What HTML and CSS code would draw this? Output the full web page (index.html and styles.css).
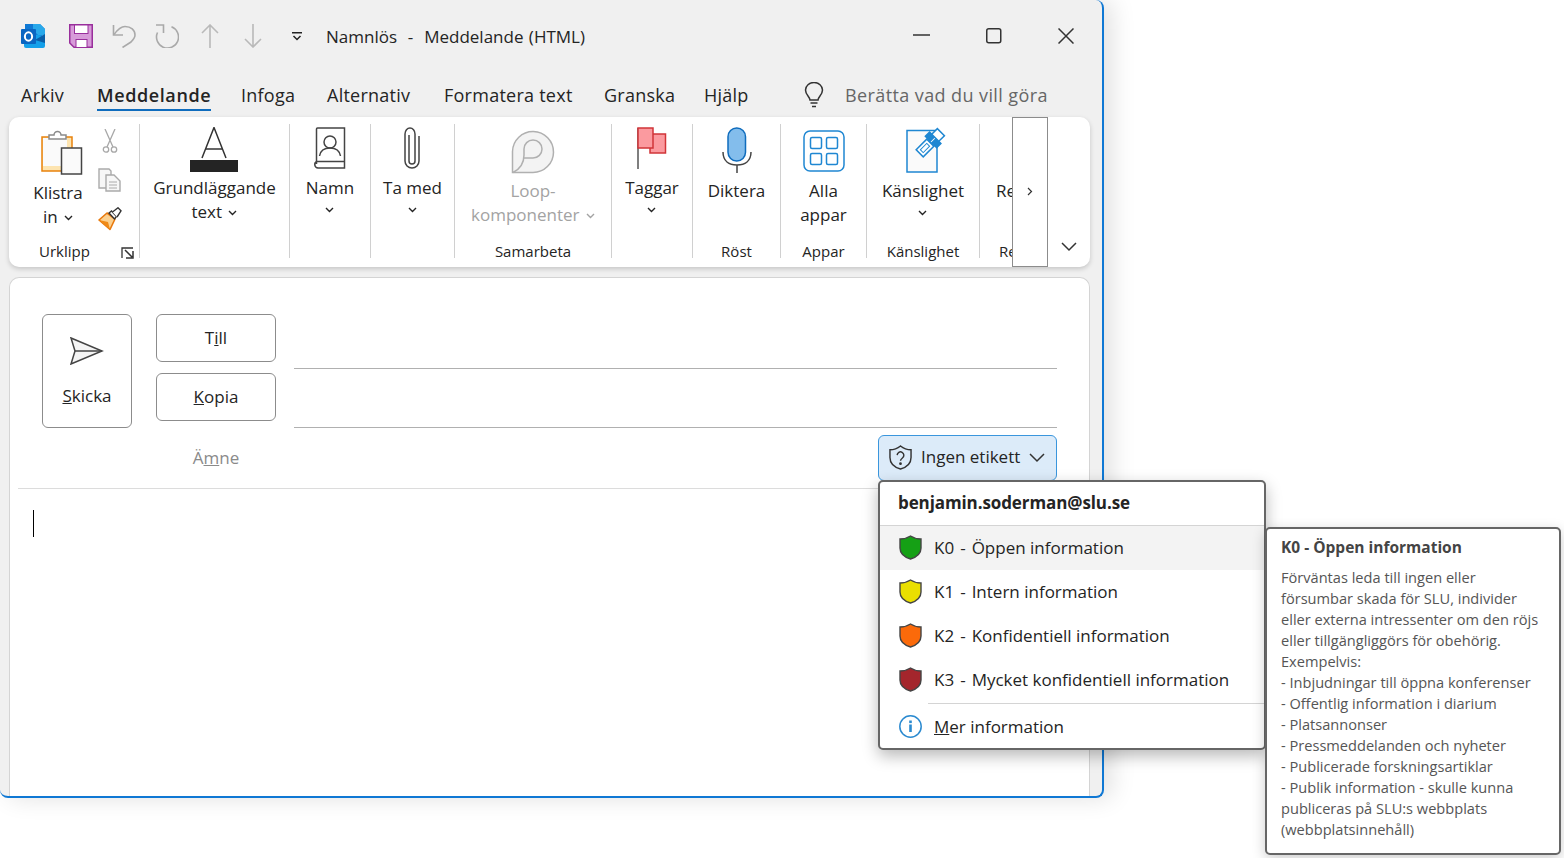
FILE: index.html
```html
<!DOCTYPE html>
<html lang="sv">
<head>
<meta charset="utf-8">
<title>Namnlös - Meddelande (HTML)</title>
<link rel="stylesheet" href="styles.css">
</head>
<body>
<div class="window">
  <header class="titlebar">
    <span class="qat qat-first"><svg width="24" height="24" viewBox="0 0 24 24"><path d="M4 0h15l5 5v5l-5 3-15-3z" fill="#0f78d4"/><path d="M12 0h7l5 5v6h-7l-5-5z" fill="#28a8ea"/><path d="M3 9l21 3v10a2 2 0 0 1-2 2H5a2 2 0 0 1-2-2z" fill="#14a0ea"/><path d="M14 16l10-6v9z" fill="#0a5ea8"/><rect x="0" y="5" width="15" height="15" rx="1" fill="#0a66c2"/><ellipse cx="7.500" cy="12.500" rx="3.600" ry="4.200" fill="none" stroke="#fff" stroke-width="2"/></svg></span>
    <span class="qat"><svg width="24" height="24" viewBox="0 0 24 24"><path d="M.75.75h22.5v22.5H5L.75 19z" fill="#d79bd9" stroke="#992f9c" stroke-width="1.500"/><rect x="5.500" y="1" width="13.500" height="8.500" fill="#fff" stroke="#992f9c"/><rect x="7" y="15.500" width="11" height="8" fill="#fff" stroke="#992f9c"/></svg></span>
    <span class="qat"><svg width="24" height="24" viewBox="0 0 24 24" fill="none" stroke="#a9a9a9" stroke-width="1.600"><path d="M1.500 1v10H11"/><path d="M2 10.500C6 5 9 2.500 13 2.500c6 0 10 3.500 10 8.500 0 3-2 5-4 7l-8.500 5.500"/></svg></span>
    <span class="qat"><svg width="24" height="24" viewBox="0 0 24 24" fill="none" stroke="#a9a9a9" stroke-width="1.600"><path d="M1 1h7.500v8"/><path d="M16.500 2.800A11 11 0 1 1 2.500 8.500"/></svg></span>
    <span class="qat"><svg width="18" height="24" viewBox="0 0 18 24" fill="none" stroke="#b9b9b9" stroke-width="1.600"><path d="M9 1v23M1 9l8-8 8 8"/></svg></span>
    <span class="qat"><svg width="18" height="24" viewBox="0 0 18 24" fill="none" stroke="#b9b9b9" stroke-width="1.600"><path d="M9 0v23M1 15l8 8 8-8"/></svg></span>
    <span class="qat qat-drop"><svg width="12" height="9" viewBox="0 0 12 9" fill="none" stroke="#222" stroke-width="1.500"><path d="M1 .75h10M2.500 4l3.500 3.500L9.500 4"/></svg></span>
    <span class="doc-title">Namnlös&nbsp; - &nbsp;Meddelande (HTML)</span>
    <div class="win-controls">
      <span class="win-btn"><svg width="18" height="4" viewBox="0 0 18 4"><path d="M0 1h17" stroke="#333" stroke-width="1.500"/></svg></span>
      <span class="win-btn"><svg width="16" height="16" viewBox="0 0 16 16"><rect x=".75" y=".75" width="14" height="14" rx="2" fill="none" stroke="#333" stroke-width="1.500"/></svg></span>
      <span class="win-btn"><svg width="16" height="16" viewBox="0 0 16 16"><path d="M.5.500l15 15M15.500.500l-15 15" stroke="#333" stroke-width="1.500"/></svg></span>
    </div>
  </header>

  <nav class="tabs">
    <span class="tab t1">Arkiv</span>
    <span class="tab t2 active">Meddelande</span>
    <span class="tab t3">Infoga</span>
    <span class="tab t4">Alternativ</span>
    <span class="tab t5">Formatera text</span>
    <span class="tab t6">Granska</span>
    <span class="tab t7">Hjälp</span>
    <span class="tellme"><svg width="20" height="26" viewBox="0 0 20 26" fill="none" stroke="#333" stroke-width="1.500"><path d="M6 18c0-3-4.500-5-4.500-10a8.500 7.500 0 0 1 17 0c0 5-4.500 7-4.500 10z"/><path d="M6.500 21h7M8 24.500h4"/></svg><span class="tell-text">Berätta vad du vill göra</span></span>
  </nav>

  <section class="ribbon">
    <div class="group g1">
      <div class="clip-row">
        <div class="rb-btn paste">
          <div class="ic ic-l"><svg class="paste-icon" width="46" height="46" viewBox="0 0 46 46"><rect x="4" y="8" width="30" height="34" fill="#fde4b0" stroke="#e8820c" stroke-width="1.500"/><rect x="5" y="9" width="24" height="28" fill="#fafafa"/><path d="M11 10V6h5a3.500 3.500 0 0 1 7 0h5v4z" fill="#fff" stroke="#8a8a8a" stroke-width="1.500"/><rect x="23.500" y="19" width="20" height="26" fill="#fafafa" stroke="#444" stroke-width="1.500"/></svg></div>
          <div class="rb-text">Klistra<br>in <svg class="chev" width="9" height="6" viewBox="0 0 9 6"><path d="M1 1l3.500 3.500L8 1"/></svg></div>
        </div>
        <div class="small-col">
          <svg width="16" height="24" viewBox="0 0 16 24" fill="none" stroke="#a8a8a8" stroke-width="1.300"><circle cx="4" cy="20.500" r="2.700"/><circle cx="12" cy="20.500" r="2.700"/><path d="M5 18L13 0M11 18L3 0"/></svg>
          <svg width="24" height="24" viewBox="0 0 24 24" fill="none" stroke="#aaa" stroke-width="1.400"><path d="M8 20H1V1h10l2 2v4" fill="#f7f7f7"/><path d="M8 7h8l6 6v10H8z" fill="#f7f7f7"/><path d="M11 14h8M11 17h8M11 20h8" stroke-width="1"/></svg>
          <svg width="24" height="24" viewBox="0 0 24 24"><path d="M1 13l8-7 8 6-5 10.500z" fill="#fbd08f" stroke="#e8780c" stroke-width="1.600" stroke-linejoin="round"/><path d="M1 13l9 2 2 7.500z" fill="#ef8a17"/><path d="M11 6l2.500-2 5 5.500-2 2.500z" fill="#fff" stroke="#333" stroke-width="1.400"/><path d="M14.500 5L20 .8l3 3-4 6.200" fill="#fff" stroke="#333" stroke-width="1.400"/></svg>
        </div>
      </div>
      <div class="group-label clip-label"><span>Urklipp</span><svg width="13" height="12" viewBox="0 0 13 12" fill="none" stroke="#333" stroke-width="1.300"><path d="M1 11V1h11"/><path d="M4 3l7 7M5 11h7V4" stroke-width="1.500"/></svg></div>
    </div>

    <div class="group g2">
      <div class="rb-btn">
        <div class="ic"><svg width="48" height="46" viewBox="0 0 48 46"><path d="M12 31L24 .5 36 31" fill="none" stroke="#333" stroke-width="1.500"/><path d="M16 22h16" stroke="#333" stroke-width="1.500"/><rect y="33" width="48" height="12" fill="#242424"/></svg></div>
        <div class="rb-text">Grundläggande<br>text <svg class="chev" width="9" height="6" viewBox="0 0 9 6"><path d="M1 1l3.500 3.500L8 1"/></svg></div>
      </div>
    </div>

    <div class="group g3">
      <div class="rb-btn">
        <div class="ic"><svg width="33" height="42" viewBox="0 0 33 42" fill="none" stroke="#444" stroke-width="1.500"><path d="M3.500 37V2a1 1 0 0 1 1-1h27v40H5a3.500 3.500 0 0 1-1.500-6.500h28"/><circle cx="17" cy="15" r="6"/><path d="M6.500 29c1-6 5-8 10.500-8s9.500 2 10.500 8"/></svg></div>
        <div class="rb-text">Namn<br><svg class="chev solo" width="9" height="6" viewBox="0 0 9 6"><path d="M1 1l3.500 3.500L8 1"/></svg></div>
      </div>
    </div>

    <div class="group g4">
      <div class="rb-btn">
        <div class="ic"><svg width="16" height="42" viewBox="0 0 16 42" fill="none" stroke="#444" stroke-width="1.500"><path d="M5 8v26a3 3 0 0 0 6 0V7a5 6 0 0 0-10 0v27a7 7 0 0 0 14 0V9"/></svg></div>
        <div class="rb-text">Ta med<br><svg class="chev solo" width="9" height="6" viewBox="0 0 9 6"><path d="M1 1l3.500 3.500L8 1"/></svg></div>
      </div>
    </div>

    <div class="group g5">
      <div class="rb-btn">
        <div class="ic ic-m"><svg width="44" height="44" viewBox="0 0 44 44" fill="none" stroke="#b0b0b0" stroke-width="1.500"><path d="M1.500 42.500V21.500a20.500 20.500 0 1 1 20.500 21z" fill="#f3f3f3"/><path d="M13 19a9 9 0 1 1 9 9h-9"/><path d="M13 19v6c0 8-4 14-11 17.500"/></svg></div>
        <div class="rb-text muted">Loop-<br>komponenter <svg class="chev" width="9" height="6" viewBox="0 0 9 6"><path d="M1 1l3.500 3.500L8 1"/></svg></div>
      </div>
      <div class="group-label">Samarbeta</div>
    </div>

    <div class="group g6">
      <div class="rb-btn">
        <div class="ic"><svg width="30" height="42" viewBox="0 0 30 42"><path d="M1 1v41" stroke="#555" stroke-width="1.500"/><rect x="13" y="7" width="15.500" height="19" fill="#fb9a9f" stroke="#d13438" stroke-width="1.500"/><rect x="1" y="1" width="15" height="20" fill="#fb9a9f" stroke="#d13438" stroke-width="1.500"/></svg></div>
        <div class="rb-text">Taggar<br><svg class="chev solo" width="9" height="6" viewBox="0 0 9 6"><path d="M1 1l3.500 3.500L8 1"/></svg></div>
      </div>
    </div>

    <div class="group g7">
      <div class="rb-btn">
        <div class="ic"><svg width="30" height="46" viewBox="0 0 30 46" fill="none"><rect x="6" y="1" width="17.500" height="33" rx="8.700" fill="#83bdec" stroke="#0f6cbd" stroke-width="1.500"/><path d="M1 25c0 9 6 13 14 13s14-4 14-13M15 38v8" stroke="#444" stroke-width="1.500"/></svg></div>
        <div class="rb-text gap-m">Diktera</div>
      </div>
      <div class="group-label">Röst</div>
    </div>

    <div class="group g8">
      <div class="rb-btn">
        <div class="ic ic-m"><svg width="42" height="42" viewBox="0 0 42 42" fill="none" stroke="#1f87d2" stroke-width="1.500"><rect x="1" y="1" width="40" height="40" rx="6"/><rect x="7.500" y="7.500" width="11" height="11" rx="1.500"/><rect x="23.500" y="7.500" width="11" height="11" rx="1.500"/><rect x="7.500" y="23.500" width="11" height="11" rx="1.500"/><rect x="23.500" y="23.500" width="11" height="11" rx="1.500"/></svg></div>
        <div class="rb-text">Alla<br>appar</div>
      </div>
      <div class="group-label">Appar</div>
    </div>

    <div class="group g9">
      <div class="rb-btn">
        <div class="ic"><svg class="sens-icon" width="42" height="46" viewBox="0 0 42 46"><path d="M1 3.500h30V45H1z" fill="#fafafa" stroke="#1f87d2" stroke-width="1.500"/><g transform="translate(25 15) rotate(-45)" stroke="#1f87d2" stroke-width="1.500"><rect x="-16" y="-5" width="15" height="10" fill="#fff"/><rect x="-13" y="-2" width="9" height="4" fill="#fff" stroke-width="1"/><rect x="0" y="-8" width="6" height="16" fill="#1f87d2"/><path d="M0 0h6" stroke="#fff" stroke-width="1"/><rect x="6" y="-5" width="8" height="10" fill="#fff"/></g></svg></div>
        <div class="rb-text gap-m">Känslighet<br><svg class="chev solo" width="9" height="6" viewBox="0 0 9 6"><path d="M1 1l3.500 3.500L8 1"/></svg></div>
      </div>
      <div class="group-label">Känslighet</div>
    </div>

    <div class="group g10">
      <div class="rb-btn cut">
        <div class="ic ic-m"></div>
        <div class="rb-text">Re</div>
      </div>
      <div class="group-label cut-label">Re</div>
    </div>

    <div class="ribbon-scroll"><svg width="6" height="9" viewBox="0 0 6 9" fill="none" stroke="#333" stroke-width="1.200"><path d="M1 1l3.500 3.500L1 8"/></svg></div>
    <svg class="ribbon-collapse" width="16" height="10" viewBox="0 0 16 10" fill="none" stroke="#333" stroke-width="1.500"><path d="M1 1l7 7 7-7"/></svg>
  </section>

  <main class="compose">
    <div class="head">
      <button class="send"><svg width="34" height="28" viewBox="0 0 34 28" fill="none" stroke="#444" stroke-width="1.500"><path d="M1 1l31 13L1 27l4-13z" fill="#f4f4f4"/><path d="M5 14h27"/></svg><span><u>S</u>kicka</span></button>
      <button class="addr"><span>T<u>i</u>ll</span></button>
      <div class="field"></div>
      <button class="addr"><span><u>K</u>opia</span></button>
      <div class="field"></div>
      <div class="subject">Ä<u>m</u>ne</div>
      <button class="label-btn"><svg width="23" height="25" viewBox="0 0 24 26" fill="none" stroke="#333" stroke-width="1.500"><path d="M12 1c3 2.500 6.500 4 11 4v8c0 6-4 10-11 12C5 23 1 19 1 13V5c4.500 0 8-1.500 11-4z"/><path d="M8.500 10.500a3.500 3.500 0 1 1 5.500 3c-1.300.9-2 1.500-2 3"/><circle cx="12" cy="19.500" r=".7" fill="#333"/></svg><span>Ingen etikett</span><svg width="16" height="10" viewBox="0 0 16 10" fill="none" stroke="#333" stroke-width="1.500"><path d="M1 1l7 7 7-7"/></svg></button>
    </div>
    <div class="body"><span class="caret"></span></div>
  </main>
</div>

<div class="menu">
  <div class="menu-head">benjamin.soderman@slu.se</div>
  <div class="menu-row hover"><svg class="shield" width="23" height="25" viewBox="0 0 23 25"><path d="M11.500 1c3 2 6.500 3 10.500 3v9c0 5-4 9-10.500 11C5 22 1 18 1 13V4c4 0 7.500-1 10.500-3z" fill="#15a015" stroke="#444" stroke-width="1.400"/></svg><span>K0<span class="dash">-</span>Öppen information</span></div>
  <div class="menu-row"><svg class="shield" width="23" height="25" viewBox="0 0 23 25"><path d="M11.500 1c3 2 6.500 3 10.500 3v9c0 5-4 9-10.500 11C5 22 1 18 1 13V4c4 0 7.500-1 10.500-3z" fill="#eadf00" stroke="#444" stroke-width="1.400"/></svg><span>K1<span class="dash">-</span>Intern information</span></div>
  <div class="menu-row"><svg class="shield" width="23" height="25" viewBox="0 0 23 25"><path d="M11.500 1c3 2 6.500 3 10.500 3v9c0 5-4 9-10.500 11C5 22 1 18 1 13V4c4 0 7.500-1 10.500-3z" fill="#fb6a0a" stroke="#444" stroke-width="1.400"/></svg><span>K2<span class="dash">-</span>Konfidentiell information</span></div>
  <div class="menu-row"><svg class="shield" width="23" height="25" viewBox="0 0 23 25"><path d="M11.500 1c3 2 6.500 3 10.500 3v9c0 5-4 9-10.500 11C5 22 1 18 1 13V4c4 0 7.500-1 10.500-3z" fill="#a4262c" stroke="#444" stroke-width="1.400"/></svg><span>K3<span class="dash">-</span>Mycket konfidentiell information</span></div>
  <div class="menu-sep"></div>
  <div class="menu-row more"><svg class="shield" width="23" height="23" viewBox="0 0 23 23"><circle cx="11.500" cy="11.500" r="10.700" fill="#fff" stroke="#2b8ad0" stroke-width="1.500"/><rect x="10.200" y="9.500" width="2.600" height="7.500" fill="#2b8ad0"/><rect x="10.200" y="5.500" width="2.600" height="2.600" fill="#2b8ad0"/></svg><span><u>M</u>er information</span></div>
</div>

<aside class="tip">
  <div class="tip-title">K0 - Öppen information</div>
  <div class="tip-body">Förväntas leda till ingen eller<br>försumbar skada för SLU, individer<br>eller externa intressenter om den röjs<br>eller tillgängliggörs för obehörig.<br>Exempelvis:<br>- Inbjudningar till öppna konferenser<br>- Offentlig information i diarium<br>- Platsannonser<br>- Pressmeddelanden och nyheter<br>- Publicerade forskningsartiklar<br>- Publik information - skulle kunna<br>publiceras på SLU:s webbplats<br>(webbplatsinnehåll)</div>
</aside>
</body>
</html>
```

FILE: styles.css
```css
* { box-sizing: border-box; }
html, body { margin: 0; height: 858px; overflow: hidden; background: #fff; }
body { position: relative; font-family: "Open Sans", "Noto Sans", sans-serif; color: #242424; font-size: 16px; }
svg { display: block; flex: none; }

.window { width: 1104px; height: 798px; background: #f0f0f0; border-right: 2px solid #0f78d4; border-bottom: 2px solid #0f78d4; border-radius: 0 8px 8px 8px; box-shadow: 8px 0 24px rgba(0,0,0,.12); display: flex; flex-direction: column; overflow: hidden; }

.titlebar { height: 72px; padding-left: 11px; display: flex; align-items: center; flex: none; }
.qat { width: 43px; display: flex; justify-content: center; }
.qat-first { margin-right: 5px; }
.qat-drop { margin-left: 1px; }
.doc-title { margin-left: 8px; font-size: 17px; word-spacing: 1px; white-space: nowrap; }
.win-controls { margin-left: auto; display: flex; }
.win-btn { width: 72px; height: 16px; display: flex; justify-content: center; align-items: center; }

.tabs { height: 45px; padding-left: 21px; display: flex; flex: none; }
.tab { position: relative; padding-top: 8px; line-height: 31px; font-size: 18px; letter-spacing: .25px; white-space: nowrap; }
.t1 { width: 76px; } .t2 { width: 144px; } .t3 { width: 86px; } .t4 { width: 117px; } .t5 { width: 160px; } .t6 { width: 100px; } .t7 { width: 100px; }
.active { font-weight: 600; letter-spacing: .6px; }
.active::after { content: ""; position: absolute; left: 0; width: 114px; top: 37px; height: 2px; background: #0f6cbd; }
.tellme { display: flex; align-items: center; gap: 21px; height: 45px; }
.tell-text { font-size: 18px; color: #666; letter-spacing: .4px; }

.ribbon { position: relative; margin-left: 9px; width: 1081px; height: 150px; flex: none; padding-top: 7px; background: #fff; border-radius: 10px; box-shadow: 0 2px 5px rgba(0,0,0,.18); display: flex; }
.group { height: 134px; border-right: 1px solid #d0d0d0; display: flex; flex-direction: column; align-items: center; flex: none; }
.g1 { width: 131px; align-items: flex-start; } .g2 { width: 150px; } .g3 { width: 81px; } .g4 { width: 84px; } .g5 { width: 157px; } .g6 { width: 81px; } .g7 { width: 88px; } .g8 { width: 86px; } .g9 { width: 113px; } .g10 { width: 33px; border-right: 0; align-items: flex-start; padding-left: 16px; }
.rb-btn { height: 118px; display: flex; flex-direction: column; align-items: center; }
.ic { height: 52px; padding-top: 3px; display: flex; justify-content: center; }
.ic-m { height: 55px; padding-top: 6px; }
.ic-l { height: 57px; padding-top: 5px; }
.paste-icon { margin-left: 6px; }
.sens-icon { margin-left: 8px; }
.rb-text { font-size: 17px; line-height: 24px; text-align: center; white-space: nowrap; }
.gap-m { margin-top: 3px; }
.muted { color: #a3a3a3; }
.chev { display: inline-block; fill: none; stroke: currentColor; stroke-width: 1.400; vertical-align: 2px; margin-left: 2px; }
.solo { vertical-align: 5px; margin-left: 0; }
.group-label { height: 16px; line-height: 19px; font-size: 15px; white-space: nowrap; }
.cut-label { margin-left: 3px; }
.clip-row { display: flex; height: 118px; }
.paste { width: 98px; }
.small-col { width: 24px; margin-left: -9px; padding-top: 5px; display: flex; flex-direction: column; align-items: center; gap: 15px; }
.clip-label { display: flex; width: 125px; padding-left: 30px; justify-content: space-between; }
.clip-label svg { margin-top: 5px; }
.ribbon-scroll { position: absolute; left: 1003px; top: 0; width: 36px; height: 150px; background: #fff; border: 1px solid #8c8c8c; display: flex; align-items: center; justify-content: center; padding-bottom: 1px; }
.ribbon-collapse { position: absolute; left: 1052px; top: 125px; }

.compose { margin: 10px 0 0 9px; width: 1081px; flex: 1; background: #fff; border: 1px solid #d4d4d4; border-bottom: 0; border-radius: 10px 10px 0 0; display: flex; flex-direction: column; }
.head { margin-left: 8px; display: grid; grid-template-columns: 24px 90px 24px 120px 18px 763px; grid-template-rows: 59px 62px 53px; padding-top: 36px; border-bottom: 1px solid #dcdcdc; height: 211px; }
button { font: inherit; color: inherit; background: #fff; border: 1px solid #8c8c8c; border-radius: 6px; padding: 0 0 1px; cursor: default; }
.send { grid-column: 2; grid-row: 1 / 3; height: 114px; display: flex; flex-direction: column; align-items: center; padding-top: 22px; gap: 19px; font-size: 17px; }
.addr { grid-column: 4; height: 48px; font-size: 17px; }
.field { grid-column: 6; height: 55px; border-bottom: 1px solid #b0b0b0; }
.subject { grid-column: 4; grid-row: 3; text-align: center; color: #8a8a8a; font-size: 17px; line-height: 46px; }
.label-btn { grid-column: 6; grid-row: 3; justify-self: end; width: 179px; height: 46px; background: #dcebf9; border: 1px solid #3a96dd; display: flex; align-items: center; padding-left: 10px; font-size: 17px; }
.label-btn span { margin: -2px 9px 0 9px; white-space: nowrap; }
.caret { display: block; width: 1px; height: 27px; background: #000; margin: 21px 0 0 23px; }

.menu { position: absolute; left: 878px; top: 480px; width: 388px; height: 270px; background: #fff; border: 2px solid #666; border-radius: 5px; box-shadow: 0 6px 16px rgba(0,0,0,.28); }
.menu-head { height: 44px; line-height: 42px; padding-left: 18px; font-weight: 700; font-size: 17px; letter-spacing: -.1px; border-bottom: 1px solid #d4d4d4; }
.menu-row { height: 44px; display: flex; align-items: center; padding: 0 0 2px 19px; gap: 12px; font-size: 17px; white-space: nowrap; }
.more { padding-bottom: 0; }
.dash { margin: 0 6px; }
.hover { background: #f3f3f3; }
.menu-sep { height: 1px; margin: 1px 0 0 48px; background: #d4d4d4; }
.tip { position: absolute; left: 1265px; top: 527px; width: 296px; height: 328px; background: #fff; border: 2px solid #666; border-radius: 5px; padding: 8px 14px; color: #555; box-shadow: 0 4px 14px rgba(0,0,0,.2); font-size: 14.600px; white-space: nowrap; }
.tip-title { font-weight: 700; font-size: 15.500px; line-height: 21px; color: #444; margin-bottom: 9px; }
.tip-body { line-height: 21px; }
```
